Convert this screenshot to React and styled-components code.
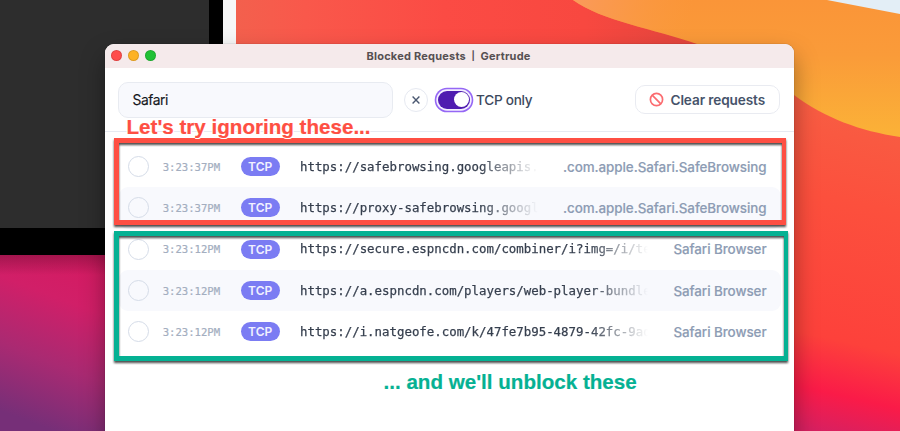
import React from 'react';
import styled, { createGlobalStyle } from 'styled-components';

const GlobalStyle = createGlobalStyle`
  * { box-sizing: border-box; }
  body { margin: 0; overflow: hidden; }
`;

const Desktop = styled.main`
  position: relative;
  width: 900px;
  height: 431px;
  overflow: hidden;
  font-family: Inter, sans-serif;
`;

const WallpaperSvg = styled.svg`
  position: absolute;
  inset: 0;
`;

const Window = styled.section`
  position: absolute;
  left: 104.5px;
  top: 43.5px;
  width: 689.5px;
  height: 440px;
  border-radius: 9px 9px 0 0;
  background: #fff;
  box-shadow: 0 0 1px rgba(0, 0, 0, 0.5), 0 12px 24px rgba(0, 0, 0, 0.36);
  overflow: hidden;
`;

const TitleBar = styled.header`
  display: flex;
  align-items: center;
  height: 24.5px;
  padding-left: 6.5px;
  background: #f5eaeb;
`;

const Lights = styled.div`
  display: flex;
  gap: 6.2px;
  width: 60px;
`;

const Light = styled.span`
  width: 11px;
  height: 11px;
  border-radius: 50%;
  background: ${(p) => p.$color};
  border: 0.5px solid rgba(0, 0, 0, 0.12);
`;

const Title = styled.h1`
  display: flex;
  gap: 5.5px;
  margin: 0 0 0 195.5px;
  font-size: 11px;
  line-height: 24px;
  font-weight: 700;
  letter-spacing: 0.22px;
  white-space: pre;
  color: #565052;
`;

const Divider = styled.span`
  width: 3.5px;
  font-size: 9px;
  line-height: 23px;
`;

const Toolbar = styled.div`
  display: flex;
  align-items: center;
  height: 64px;
  padding: 0 14px 0 13.5px;
  border-bottom: 1px solid #e7eaf1;
`;

const Search = styled.div`
  display: flex;
  align-items: center;
  width: 275px;
  height: 36px;
  padding-left: 13.5px;
  border: 1px solid #e8ebf1;
  border-radius: 10px;
  background: #f8f9fd;
  color: #16181d;
  font-size: 13.8px;
  letter-spacing: -0.45px;
  -webkit-text-stroke: 0.15px #16181d;
`;

const ClearSearch = styled.button`
  display: grid;
  place-items: center;
  width: 24px;
  height: 24px;
  margin-left: 11px;
  padding: 0;
  border: 1px solid #e6e9f1;
  border-radius: 50%;
  background: #fff;
  color: #4b5871;
`;

const Toggle = styled.span`
  display: flex;
  justify-content: flex-end;
  align-items: center;
  width: 32px;
  height: 18px;
  margin: 0 6px 0 10px;
  padding: 0 1.3px;
  border-radius: 10px;
  background: #4f1cb0;
  box-shadow: 0 0 0 1.7px #f4efff, 0 0 0 3.3px #9567f5;
`;

const Knob = styled.span`
  width: 15px;
  height: 15px;
  border-radius: 50%;
  background: #fff;
`;

const ToggleLabel = styled.span`
  font-size: 13.6px;
  font-weight: 500;
  letter-spacing: -0.26px;
  color: #3d495d;
`;

const ClearRequests = styled.button`
  display: flex;
  align-items: center;
  gap: 6.5px;
  width: 145.5px;
  height: 29px;
  margin-left: auto;
  padding: 0 0 0 13.5px;
  border: 1px solid #e9ebf1;
  border-radius: 10px;
  background: #fff;
  color: #46536a;
  font: 600 13.6px Inter, sans-serif;
  letter-spacing: -0.1px;
  white-space: nowrap;
`;

const List = styled.div`
  display: flex;
  flex-direction: column;
  padding: 14px 13.5px 0 14px;
`;

const Row = styled.div`
  display: flex;
  align-items: center;
  height: 41.3px;
  padding: 0 14px 0 9.5px;
  border-radius: 9px;
  background: ${(p) => (p.$striped ? '#f8f9fd' : '#fff')};
`;

const Radio = styled.span`
  flex: none;
  width: 21px;
  height: 21px;
  border: 1px solid #d5dce8;
  border-radius: 50%;
`;

const Time = styled.span`
  flex: none;
  width: 78px;
  margin-left: 13.7px;
  font-family: 'DejaVu Sans Mono', monospace;
  font-size: 10.6px;
  color: #a3aec0;
  -webkit-text-stroke: 0.2px #a3aec0;
`;

const Protocol = styled.span`
  flex: none;
  display: grid;
  place-items: center;
  width: 39px;
  height: 19px;
  border-radius: 10px;
  background: #7b7cf3;
  color: #f1f1ff;
  font-size: 12px;
  font-weight: 600;
`;

const Url = styled.span`
  flex: 1;
  min-width: 0;
  margin: 0 25px 0 20.3px;
  overflow: hidden;
  white-space: nowrap;
  font-family: 'DejaVu Sans Mono', monospace;
  font-size: 12.4px;
  line-height: 20px;
  color: #363f4e;
  -webkit-text-stroke: 0.25px #363f4e;
  mask-image: linear-gradient(to right, #000 calc(100% - 60px), transparent calc(100% - 1px));
`;

const AppName = styled.span`
  flex: none;
  width: ${(p) => p.$width}px;
  display: flex;
  justify-content: flex-end;
  white-space: nowrap;
  font-size: 13.4px;
  font-weight: 500;
  letter-spacing: -0.06px;
  color: #8d9cb4;
  -webkit-text-stroke: 0.15px #8d9cb4;
`;

const Highlight = styled.div`
  position: absolute;
  left: 114px;
  top: ${(p) => p.$top}px;
  width: ${(p) => p.$width}px;
  height: ${(p) => p.$height}px;
  border: solid ${(p) => p.$color};
  border-width: 5px 4px 5px 5px;
  filter: drop-shadow(0.5px 2px 0.8px rgba(0, 0, 0, 0.7));
`;

const Caption = styled.p`
  position: absolute;
  left: ${(p) => p.$left}px;
  top: ${(p) => p.$top}px;
  margin: 0;
  font: 700 20.6px/24px 'Liberation Sans', Arial, sans-serif;
  white-space: nowrap;
  color: ${(p) => p.$color};
  -webkit-text-stroke: 0.2px ${(p) => p.$color};
  text-shadow: 1px 0 #fff, -1px 0 #fff, 0 1px #fff, 0 -1px #fff, 1px 1px #fff, -1px -1px #fff;
`;

const requests = [
  { time: '3:23:37PM', url: 'https://safebrowsing.googleapis.', app: '.com.apple.Safari.SafeBrowsing', width: 202.5 },
  { time: '3:23:37PM', url: 'https://proxy-safebrowsing.googl', app: '.com.apple.Safari.SafeBrowsing', width: 202.5 },
  { time: '3:23:12PM', url: 'https://secure.espncdn.com/combiner/i?img=/i/te', app: 'Safari Browser', width: 93 },
  { time: '3:23:12PM', url: 'https://a.espncdn.com/players/web-player-bundle', app: 'Safari Browser', width: 93 },
  { time: '3:23:12PM', url: 'https://i.natgeofe.com/k/47fe7b95-4879-42fc-9ad', app: 'Safari Browser', width: 93 },
];

function Wallpaper() {
  return (
    <WallpaperSvg width="900" height="431" viewBox="0 0 900 431" aria-hidden="true">
      <defs>
        <linearGradient id="pink" x1="0.7" y1="0" x2="0.45" y2="1">
          <stop offset="0" stopColor="#d41a60" />
          <stop offset="0.3" stopColor="#d11f68" />
          <stop offset="0.65" stopColor="#a92a72" />
          <stop offset="1" stopColor="#762f78" />
        </linearGradient>
        <linearGradient id="red" gradientUnits="userSpaceOnUse" x1="236" y1="0" x2="700" y2="0">
          <stop offset="0" stopColor="#f3604d" />
          <stop offset="0.15" stopColor="#f9584b" />
          <stop offset="0.45" stopColor="#fb4b44" />
          <stop offset="0.75" stopColor="#f84840" />
          <stop offset="1" stopColor="#e2453d" />
        </linearGradient>
        <linearGradient id="side" x1="0.6" y1="0" x2="0.5" y2="1">
          <stop offset="0" stopColor="#f66245" />
          <stop offset="0.35" stopColor="#fc503d" />
          <stop offset="0.74" stopColor="#fd413b" />
          <stop offset="0.89" stopColor="#fa1b48" />
          <stop offset="1" stopColor="#d82060" />
        </linearGradient>
        <linearGradient id="orange" x1="0" y1="0" x2="0" y2="1">
          <stop offset="0" stopColor="#fa9538" />
          <stop offset="0.4" stopColor="#fa9b39" />
          <stop offset="1" stopColor="#fbb237" />
        </linearGradient>
        <linearGradient id="sheen" gradientUnits="userSpaceOnUse" x1="573" y1="0" x2="690" y2="20">
          <stop offset="0" stopColor="#fa9a5c" />
          <stop offset="0.4" stopColor="#fa9a50" stopOpacity="0.7" />
          <stop offset="1" stopColor="#fa9b40" stopOpacity="0" />
        </linearGradient>
        <linearGradient id="edge" x1="0" y1="0" x2="0" y2="1">
          <stop offset="0" stopColor="#5d0b2d" stopOpacity="0.4" />
          <stop offset="1" stopColor="#5d0b2d" stopOpacity="0" />
        </linearGradient>
      </defs>
      <rect width="900" height="431" fill="url(#red)" />
      <rect x="740" y="70" width="160" height="361" fill="url(#side)" />
      <path d="M573 0C602 21 655 29 697 44C735 57 768 78 794 95C825 118 860 131 900 137V0Z" fill="url(#orange)" />
      <path d="M573 0C602 21 655 29 697 44H720V0Z" fill="url(#sheen)" />
      <path d="M827 0L900 14V0Z" fill="#e3eef6" />
      <rect y="250" width="120" height="181" fill="url(#pink)" />
      <rect y="255" width="120" height="20" fill="url(#edge)" />
      <rect x="223" width="13" height="60" fill="#f7f7f7" />
      <rect width="223" height="255" fill="#000" />
      <rect width="209" height="228" fill="#2d2d2d" />
    </WallpaperSvg>
  );
}

export default function App() {
  return (
    <Desktop>
      <GlobalStyle />
      <Wallpaper />
      <Window>
        <TitleBar>
          <Lights>
            <Light $color="#ff4c4b" />
            <Light $color="#fdb225" />
            <Light $color="#20c135" />
          </Lights>
          <Title>
            <span>Blocked Requests</span>
            <Divider>|</Divider>
            <span>Gertrude</span>
          </Title>
        </TitleBar>
        <Toolbar>
          <Search>Safari</Search>
          <ClearSearch aria-label="Clear search">
            <svg width="8" height="8" viewBox="0 0 8 8" stroke="currentColor" strokeWidth="1.4">
              <path d="M0.6 0.6 7.4 7.4M7.4 0.6 0.6 7.4" />
            </svg>
          </ClearSearch>
          <Toggle><Knob /></Toggle>
          <ToggleLabel>TCP only</ToggleLabel>
          <ClearRequests>
            <svg width="15" height="15" viewBox="0 0 15 15" fill="none" stroke="#fb6c70" strokeWidth="1.7">
              <circle cx="7.5" cy="7.5" r="6.1" />
              <path d="M3.2 3.2 11.8 11.8" />
            </svg>
            Clear requests
          </ClearRequests>
        </Toolbar>
        <List>
          {requests.map((r, i) => (
            <Row key={r.url} $striped={i % 2 === 1}>
              <Radio />
              <Time>{r.time}</Time>
              <Protocol>TCP</Protocol>
              <Url>{r.url}</Url>
              <AppName $width={r.width}>{r.app}</AppName>
            </Row>
          ))}
        </List>
      </Window>
      <Highlight $top={138} $width={671.5} $height={87} $color="#fe4f43" />
      <Highlight $top={231} $width={674} $height={130} $color="#05b193" />
      <Caption $left={126.5} $top={115} $color="#fe4f43">Let's try ignoring these...</Caption>
      <Caption $left={383.5} $top={370} $color="#05b193">... and we'll unblock these</Caption>
    </Desktop>
  );
}
